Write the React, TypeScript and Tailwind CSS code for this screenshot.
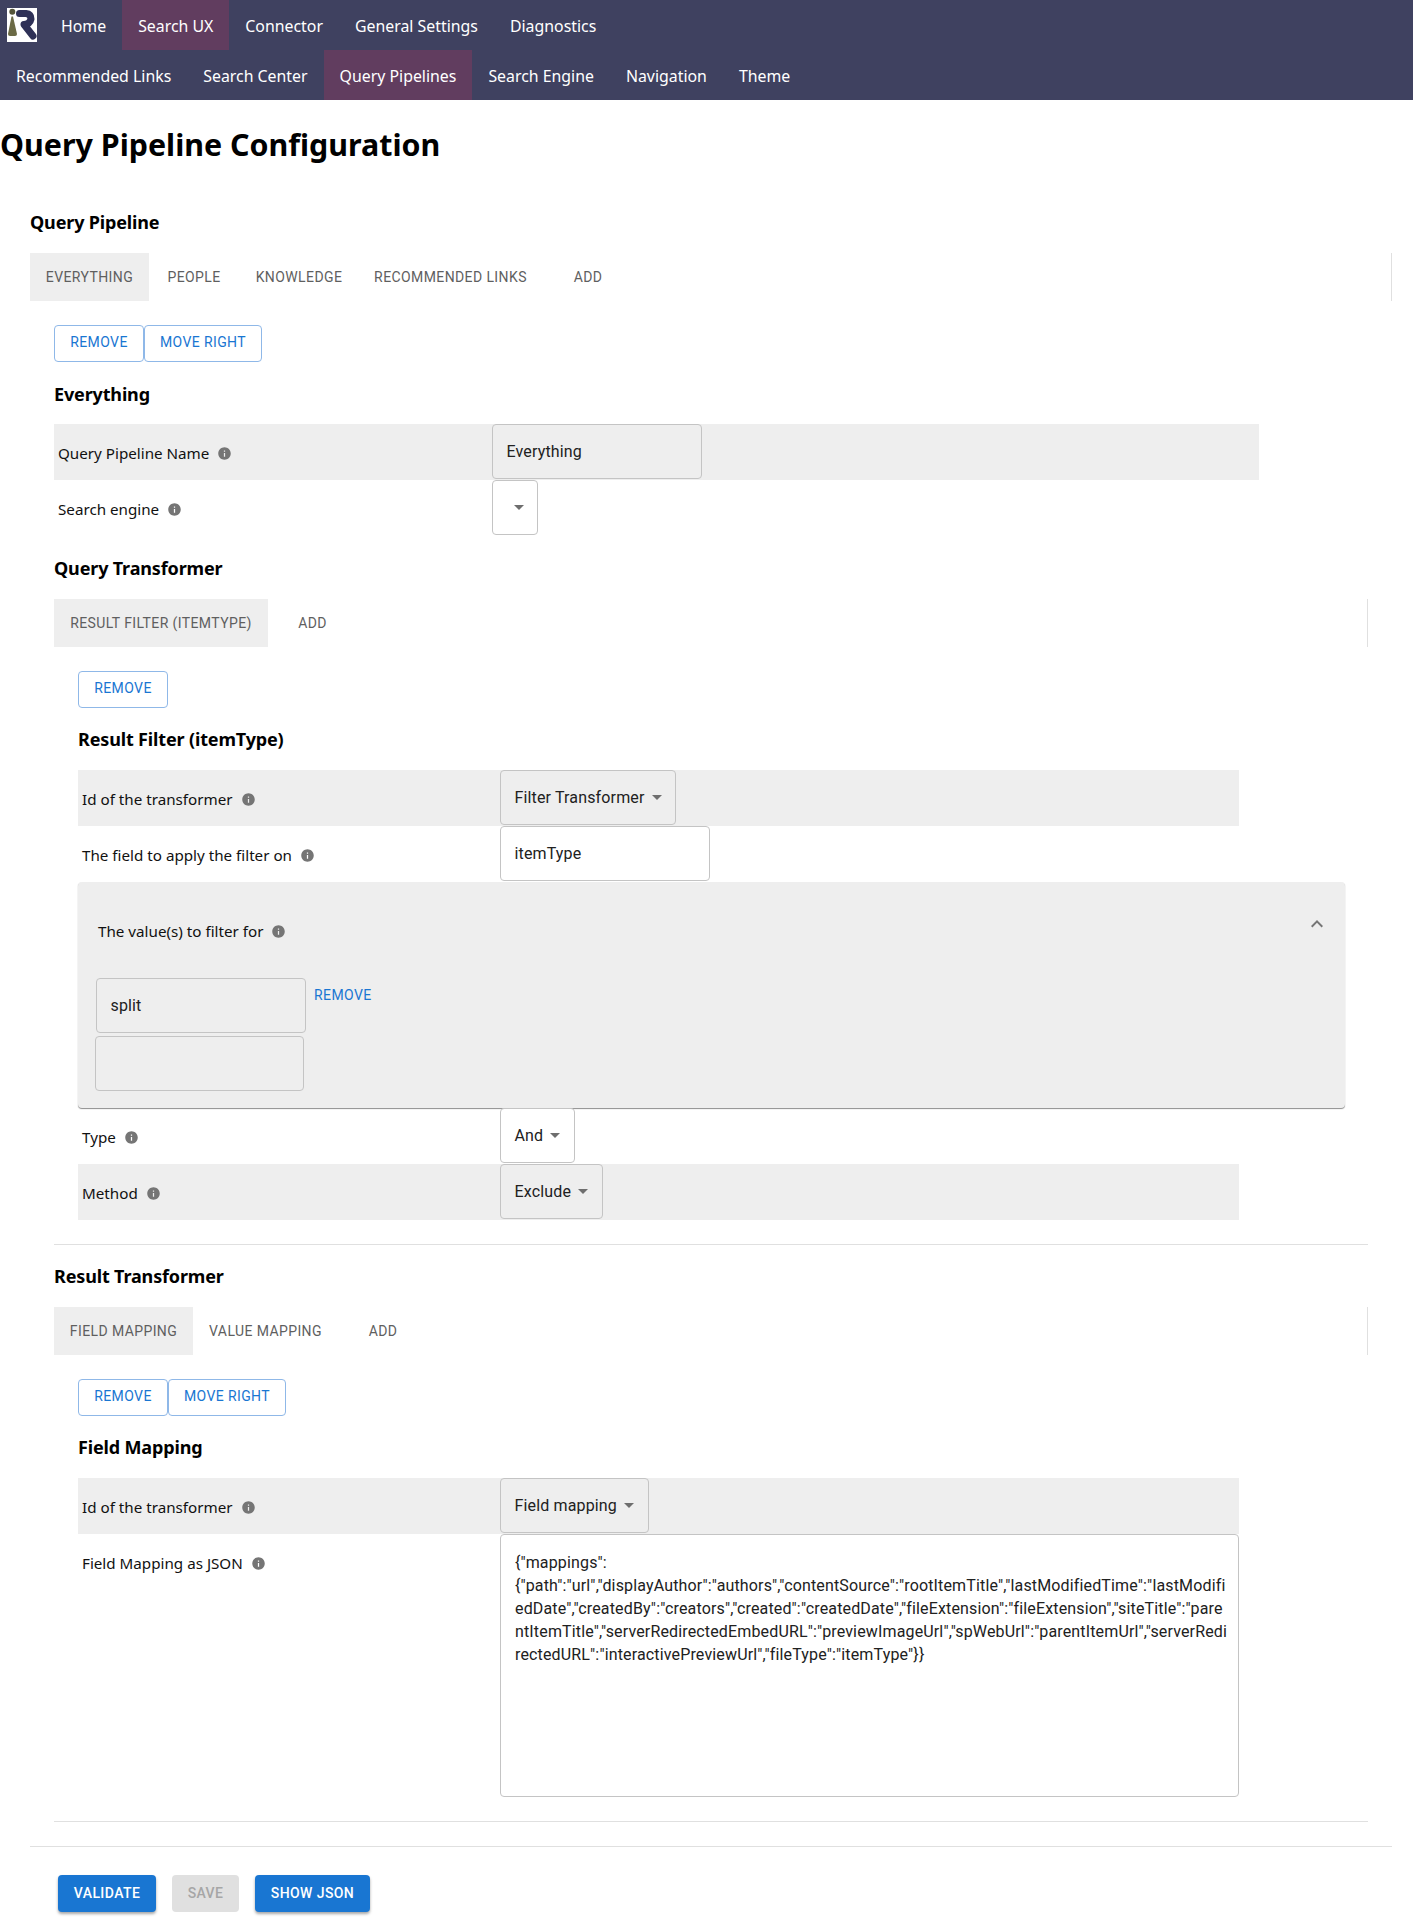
import type { ReactNode } from 'react'
import { MdArrowDropDown, MdExpandLess, MdInfo } from 'react-icons/md'

const topNav = ['Home', 'Search UX', 'Connector', 'General Settings', 'Diagnostics']
const subNav = ['Recommended Links', 'Search Center', 'Query Pipelines', 'Search Engine', 'Navigation', 'Theme']
const mappingJson =
  '{"mappings":{"path":"url","displayAuthor":"authors","contentSource":"rootItemTitle","lastModifiedTime":"lastModifiedDate","createdBy":"creators","created":"createdDate","fileExtension":"fileExtension","siteTitle":"parentItemTitle","serverRedirectedEmbedURL":"previewImageUrl","spWebUrl":"parentItemUrl","serverRedirectedURL":"interactivePreviewUrl","fileType":"itemType"}}'

function Logo() {
  return (
    <svg viewBox="0 0 30 34" className="h-[34px] w-[30px] bg-white">
      <circle cx="5.300" cy="3.800" r="3" fill="#55553a" />
      <path d="M4.500 8.500h1.500l4 17.500q0 2-2 2h-5q-2 0-2-2z" fill="#6b6a45" />
      <path
        d="M12.500 5.500H19Q24 6 24 11 23 16 17 16.500L26 28"
        fill="none"
        stroke="#2f3157"
        strokeWidth="7"
        strokeLinecap="round"
        strokeLinejoin="round"
      />
    </svg>
  )
}

function NavItem({ label, active }: { label: string; active: boolean }) {
  return (
    <div className={`flex h-[50px] items-center px-4 pt-1 text-[15.87px] text-white ${active ? 'bg-[#613d5f]' : ''}`}>
      {label}
    </div>
  )
}

function Heading({ children, className }: { children: string; className: string }) {
  return <h3 className={`h-7 text-lg leading-7 font-bold tracking-[-0.15px] text-black ${className}`}>{children}</h3>
}

function Tabs({ items }: { items: { label: string; width: string; gap?: string }[] }) {
  return (
    <div className="flex h-12 border-r border-[#e0e0e0]">
      {items.map((t, i) => (
        <div
          key={t.label}
          className={`flex h-12 items-center justify-center font-['Roboto',sans-serif] text-sm tracking-[0.4px] text-[#5f5f5f] ${t.width} ${t.gap ?? ''} ${i === 0 ? 'bg-[#eeeeee]' : ''}`}
        >
          {t.label}
        </div>
      ))}
    </div>
  )
}

function OutlineButton({ label, width }: { label: string; width: string }) {
  return (
    <button
      className={`flex h-[37px] items-center justify-center rounded border border-[#8fb8e8] pb-[3px] font-['Roboto',sans-serif] text-sm tracking-[0.4px] text-[#1976d2] ${width}`}
    >
      {label}
    </button>
  )
}

function Box({ children, width, shaded }: { children?: ReactNode; width: string; shaded?: boolean }) {
  return (
    <div
      className={`flex h-[55px] items-center rounded border border-[#c4c4c4] pl-[13.5px] font-['Roboto',sans-serif] text-base tracking-[0.15px] text-[#212121] ${width} ${shaded ? 'bg-[#eeeeee]' : 'bg-white'}`}
    >
      {children}
    </div>
  )
}

function SelectBox({ value, width, shaded }: { value?: string; width: string; shaded?: boolean }) {
  return (
    <Box width={width} shaded={shaded}>
      <span>{value}</span>
      <MdArrowDropDown size={24} className="-mt-0.5 text-[#6e6e6e]" />
    </Box>
  )
}

function Label({ text }: { text: string }) {
  return (
    <span className="flex items-center pl-1 text-[15.2px] text-[#111111]">
      {text}
      <MdInfo size={15} className="ml-2 text-[#757575]" />
    </span>
  )
}

function Row({
  label,
  labelWidth,
  rowWidth,
  shaded,
  children,
}: {
  label: string
  labelWidth: string
  rowWidth: string
  shaded?: boolean
  children: ReactNode
}) {
  return (
    <div className={`flex h-14 ${rowWidth} ${shaded ? 'bg-[#eeeeee]' : ''}`}>
      <div className={`flex items-center pt-[3px] ${labelWidth}`}>
        <Label text={label} />
      </div>
      {children}
    </div>
  )
}

export default function App() {
  return (
    <div className="min-h-[1920px] bg-white font-['Noto_Sans',sans-serif]">
      <header className="bg-[#3f4160]">
        <div className="flex h-[50px] items-center">
          <div className="ml-[7px] mr-2">
            <Logo />
          </div>
          {topNav.map((n) => (
            <NavItem key={n} label={n} active={n === 'Search UX'} />
          ))}
        </div>
        <div className="flex h-[50px]">
          {subNav.map((n) => (
            <NavItem key={n} label={n} active={n === 'Query Pipelines'} />
          ))}
        </div>
      </header>

      <h1 className="mt-[23px] h-[43px] text-[30.4px] leading-[43px] font-bold text-black">
        Query Pipeline Configuration
      </h1>

      <div className="mt-[42px] ml-[30px] w-[1362px]">
        <Heading className="mb-[17px]">Query Pipeline</Heading>
        <Tabs
          items={[
            { label: 'EVERYTHING', width: 'w-[119px]' },
            { label: 'PEOPLE', width: 'w-[90px]' },
            { label: 'KNOWLEDGE', width: 'w-[120px]' },
            { label: 'RECOMMENDED LINKS', width: 'w-[183px]' },
            { label: 'ADD', width: 'w-[60px]', gap: 'ml-[16px]' },
          ]}
        />

        <div className="px-6">
          <div className="mt-6 flex">
            <OutlineButton label="REMOVE" width="w-[90px]" />
            <OutlineButton label="MOVE RIGHT" width="w-[118px]" />
          </div>
          <Heading className="mt-[18px] mb-4">Everything</Heading>
          <Row label="Query Pipeline Name" labelWidth="w-[438px]" rowWidth="w-[1205px]" shaded>
            <Box width="w-[210px]" shaded>
              <span>Everything</span>
            </Box>
          </Row>
          <Row label="Search engine" labelWidth="w-[438px]" rowWidth="w-[1205px]">
            <SelectBox width="w-[46px]" />
          </Row>

          <Heading className="mt-[18px] mb-[17px]">Query Transformer</Heading>
          <Tabs
            items={[
              { label: 'RESULT FILTER (ITEMTYPE)', width: 'w-[214px]' },
              { label: 'ADD', width: 'w-[60px]', gap: 'ml-[14.5px]' },
            ]}
          />

          <div className="px-6">
            <div className="mt-6">
              <OutlineButton label="REMOVE" width="w-[90px]" />
            </div>
            <Heading className="mt-[17px] mb-[17px]">Result Filter (itemType)</Heading>
            <Row label="Id of the transformer" labelWidth="w-[422px]" rowWidth="w-[1161px]" shaded>
              <SelectBox value="Filter Transformer" width="w-[176px]" shaded />
            </Row>
            <Row label="The field to apply the filter on" labelWidth="w-[422px]" rowWidth="w-[1161px]">
              <Box width="w-[210px]">
                <span>itemType</span>
              </Box>
            </Row>

            <div className="w-[1267px] rounded bg-[#eeeeee] pb-[17px] shadow-[0_1px_1px_rgba(0,0,0,0.45)]">
              <div className="flex h-24 items-start justify-between pt-[38px] pr-[16px] pl-[16px]">
                <Label text="The value(s) to filter for" />
                <MdExpandLess size={24} className="-mt-[8px] text-[#757575]" />
              </div>
              <div className="flex pl-[18px]">
                <Box width="w-[210px]" shaded>
                  <span>split</span>
                </Box>
                <span className="ml-2 pt-[7px] font-['Roboto',sans-serif] text-sm tracking-[0.4px] text-[#1976d2]">
                  REMOVE
                </span>
              </div>
              <div className="mt-[3px] pl-[17px]">
                <Box width="w-[209px]" shaded />
              </div>
            </div>

            <Row label="Type" labelWidth="w-[422px]" rowWidth="w-[1161px]">
              <SelectBox value="And" width="w-[75px]" />
            </Row>
            <Row label="Method" labelWidth="w-[422px]" rowWidth="w-[1161px]" shaded>
              <SelectBox value="Exclude" width="w-[103px]" shaded />
            </Row>
          </div>

          <div className="mt-6 border-t border-[#e0e0e0]" />

          <Heading className="mt-[17px] mb-[17px]">Result Transformer</Heading>
          <Tabs
            items={[
              { label: 'FIELD MAPPING', width: 'w-[139px]' },
              { label: 'VALUE MAPPING', width: 'w-[145px]' },
              { label: 'ADD', width: 'w-[60px]', gap: 'ml-[15px]' },
            ]}
          />

          <div className="px-6">
            <div className="mt-6 flex">
              <OutlineButton label="REMOVE" width="w-[90px]" />
              <OutlineButton label="MOVE RIGHT" width="w-[118px]" />
            </div>
            <Heading className="mt-[17px] mb-[17px]">Field Mapping</Heading>
            <Row label="Id of the transformer" labelWidth="w-[422px]" rowWidth="w-[1161px]" shaded>
              <SelectBox value="Field mapping" width="w-[149px]" shaded />
            </Row>
            <div className="flex w-[1161px]">
              <div className="w-[422px] pt-[18px]">
                <Label text="Field Mapping as JSON" />
              </div>
              <textarea
                readOnly
                value={mappingJson}
                className="h-[263px] w-[739px] resize-none rounded border border-[#c4c4c4] py-4 pr-[9px] pl-[14px] font-['Roboto',sans-serif] text-base leading-[23px] tracking-[0.15px] text-[#212121] outline-none"
              />
            </div>
          </div>

          <div className="mt-6 border-t border-[#e0e0e0]" />
        </div>

        <div className="mt-6 border-t border-[#e0e0e0]" />

        <div className="mt-7 flex gap-4 pl-7 font-['Roboto',sans-serif] text-sm font-medium tracking-[0.4px]">
          <button className="h-[37px] w-[98px] rounded bg-[#1976d2] pb-0.5 text-white shadow-[0_2px_3px_rgba(0,0,0,0.35)]">
            VALIDATE
          </button>
          <button className="h-[37px] w-[67px] rounded bg-[#e0e0e0] pb-0.5 text-[#a6a6a6]">SAVE</button>
          <button className="h-[37px] w-[115px] rounded bg-[#1976d2] pb-0.5 text-white shadow-[0_2px_3px_rgba(0,0,0,0.35)]">
            SHOW JSON
          </button>
        </div>
      </div>
    </div>
  )
}
